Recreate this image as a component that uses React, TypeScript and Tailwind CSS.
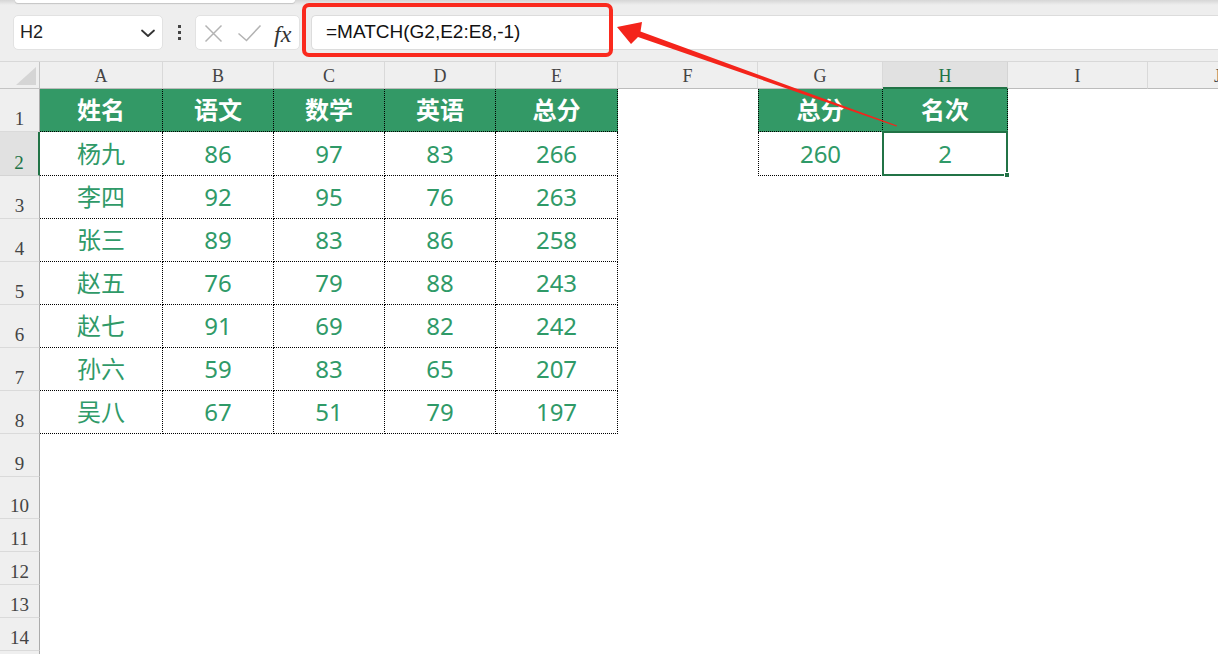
import React from "react";

const LETTERS = ["A", "B", "C", "D", "E", "F", "G", "H", "I", "J"];
const ROWH = [43, 44, 43, 43, 43, 43, 43, 43, 43, 42, 33, 33, 33, 33, 10];

const names = ["杨九", "李四", "张三", "赵五", "赵七", "孙六", "吴八"];
const scores = [
  [86, 97, 83, 266],
  [92, 95, 76, 263],
  [89, 83, 86, 258],
  [76, 79, 88, 243],
  [91, 69, 82, 242],
  [59, 83, 65, 207],
  [67, 51, 79, 197],
];
const heads = ["姓名", "语文", "数学", "英语", "总分"];

const cellFont = {
  fontFamily: '"Noto Sans", "Noto Sans CJK SC", sans-serif',
};

function Toolbar() {
  return (
    <div className="relative h-[61px] bg-[#eeeeee] flex items-start pt-[15px]">
      <div className="absolute left-0 top-0 right-0 h-[5px] bg-gradient-to-b from-[#d6d6d6] to-[#eeeeee]" />
      <div className="absolute left-[15px] top-0 w-[280px] h-[3px] bg-white rounded-b-[4px] shadow-[0_1px_1px_rgba(0,0,0,0.15)]" />
      <div className="relative ml-[13px] w-[150px] h-[35px] rounded-[5px] bg-white border border-[#e2e2e2] flex items-center justify-between pl-[6px] pr-[5px]">
        <span className="text-[18px] text-[#222]" style={{ fontFamily: '"Liberation Sans", Arial, sans-serif' }}>H2</span>
        <svg width="18" height="18" viewBox="0 0 18 18" fill="none">
          <path d="M3 6.5 L9 12 L15 6.5" stroke="#333" strokeWidth="1.8" strokeLinecap="round" strokeLinejoin="round" />
        </svg>
      </div>
      <div className="w-[32px] h-[35px] flex flex-col items-center justify-center gap-[3px]">
        <div className="w-[3px] h-[3px] bg-[#444]" />
        <div className="w-[3px] h-[3px] bg-[#444]" />
        <div className="w-[3px] h-[3px] bg-[#444]" />
      </div>
      <div className="relative w-[105px] h-[35px] rounded-[5px] bg-white border border-[#e2e2e2] flex items-center">
        <svg className="absolute left-[8px] top-[8px]" width="19" height="19" viewBox="0 0 19 19" fill="none">
          <path d="M1.5 1.5 L17.5 17.5 M17.5 1.5 L1.5 17.5" stroke="#b3b3b3" strokeWidth="1.5" />
        </svg>
        <svg className="absolute left-[41px] top-[8px]" width="25" height="19" viewBox="0 0 25 19" fill="none">
          <path d="M1.5 9.5 L9.5 16.5 L23.5 1.5" stroke="#b3b3b3" strokeWidth="1.5" />
        </svg>
        <span
          className="absolute left-[78px] top-[0px] text-[24px] italic text-[#333]"
          style={{ fontFamily: '"Liberation Serif", "Times New Roman", serif' }}
        >
          fx
        </span>
      </div>
      <div className="ml-[11px] flex-1 h-[35px] rounded-l-[5px] bg-white border border-r-0 border-[#dcdcdc] flex items-center pl-[14px]">
        <span className="text-[19px] text-[#111]" style={{ fontFamily: '"Liberation Sans", Arial, sans-serif' }}>
          =MATCH(G2,E2:E8,-1)
        </span>
      </div>
    </div>
  );
}

function ColHeader() {
  return (
    <>
      <div className="relative bg-[#efefef] border-r border-b border-[#c4c4c4]">
        <svg className="absolute right-[3px] bottom-[3px]" width="20" height="18" viewBox="0 0 20 18">
          <polygon points="20,0 20,18 0,18" fill="#d5d5d5" />
        </svg>
      </div>
      {LETTERS.map((l) => {
        const sel = l === "H";
        return (
          <div
            key={l}
            className={
              sel
                ? "flex items-center justify-center bg-[#e1e1e1] border-r border-[#d4d4d4] border-b-2 border-b-[#217346] text-[#217346]"
                : "flex items-center justify-center bg-[#efefef] border-r border-[#d9d9d9] border-b border-b-[#bcbcbc] text-[#444]"
            }
            style={{ fontFamily: '"Liberation Serif", "Times New Roman", serif' }}
          >
            <span className="text-[18px] leading-none pt-[2px]">{l}</span>
          </div>
        );
      })}
    </>
  );
}

function RowHead({ n, blank }: { n: number; blank?: boolean }) {
  const sel = n === 2;
  return (
    <div
      className={
        sel
          ? "flex items-end justify-center pb-[3px] bg-[#e1e1e1] border-r-2 border-r-[#217346] border-b border-b-[#d4d4d4] text-[#217346]"
          : "flex items-end justify-center pb-[3px] bg-[#efefef] border-r border-r-[#ababab] border-b border-b-[#dadada] text-[#444]"
      }
      style={{ fontFamily: '"Liberation Serif", "Times New Roman", serif' }}
    >
      {!blank && <span className="text-[19px] leading-none">{n}</span>}
    </div>
  );
}

function Cell({
  text,
  kind,
  leftDot,
  selected,
}: {
  text?: string | number;
  kind: "empty" | "head" | "data";
  leftDot?: boolean;
  selected?: boolean;
}) {
  if (kind === "empty") return <div className="bg-white" />;
  const base =
    kind === "head"
      ? "bg-[#339966] text-white font-bold"
      : "bg-white text-[#2f9a68]";
  return (
    <div
      className={
        "relative flex items-center justify-center border-r border-b border-dotted border-black text-[24px] leading-none " +
        base +
        (leftDot ? " border-l" : "")
      }
      style={cellFont}
    >
      <span>{text}</span>
      {selected && (
        <div className="absolute -left-px -top-px -right-px -bottom-px border-2 border-[#217346]">
          <div className="absolute -right-[4px] -bottom-[4px] w-[6px] h-[6px] bg-[#217346] border border-white" />
        </div>
      )}
    </div>
  );
}

function Sheet() {
  const rows: React.ReactNode[] = [];
  ROWH.forEach((_, ri) => {
    const r = ri + 1;
    const cells: React.ReactNode[] = [];
    cells.push(<RowHead key={`rh${r}`} n={r} blank={r === 15} />);
    for (let c = 0; c < 10; c++) {
      const key = `c${r}-${c}`;
      if (r === 1 && c <= 4) {
        cells.push(<Cell key={key} kind="head" text={heads[c]} />);
      } else if (r >= 2 && r <= 8 && c <= 4) {
        const t = c === 0 ? names[r - 2] : scores[r - 2][c - 1];
        cells.push(<Cell key={key} kind="data" text={t} />);
      } else if (r === 1 && c === 6) {
        cells.push(<Cell key={key} kind="head" text="总分" leftDot />);
      } else if (r === 1 && c === 7) {
        cells.push(<Cell key={key} kind="head" text="名次" />);
      } else if (r === 2 && c === 6) {
        cells.push(<Cell key={key} kind="data" text={260} leftDot />);
      } else if (r === 2 && c === 7) {
        cells.push(<Cell key={key} kind="data" text={2} selected />);
      } else {
        cells.push(<Cell key={key} kind="empty" />);
      }
    }
    rows.push(<React.Fragment key={`r${r}`}>{cells}</React.Fragment>);
  });
  return (
    <div className="overflow-hidden w-[1218px]">
      <div className="grid w-[1288px] grid-cols-[40px_123px_111px_111px_111px_122px_140px_125px_125px_140px_140px] grid-rows-[27px_43px_44px_43px_43px_43px_43px_43px_43px_43px_42px_33px_33px_33px_33px_10px]">
        <ColHeader />
        {rows}
      </div>
    </div>
  );
}

export default function App() {
  return (
    <div className="relative w-[1218px] h-[654px] overflow-hidden bg-white">
      <Toolbar />
      <div className="h-0 border-t border-[#d8d8d8]" />
      <Sheet />
      {/* red annotation box */}
      <div className="absolute left-[302px] top-[3px] w-[311px] h-[54px] border-[4px] border-[#fa2a1e] rounded-[7px] pointer-events-none" />
      {/* red arrow */}
      <svg className="absolute left-0 top-0 pointer-events-none" width="1218" height="200" viewBox="0 0 1218 200">
        <polygon
          points="617,27 642,22 640.5,31.5 897,125.5 896.5,126.5 638,37 631,44"
          fill="#f4241b"
        />
      </svg>
    </div>
  );
}
